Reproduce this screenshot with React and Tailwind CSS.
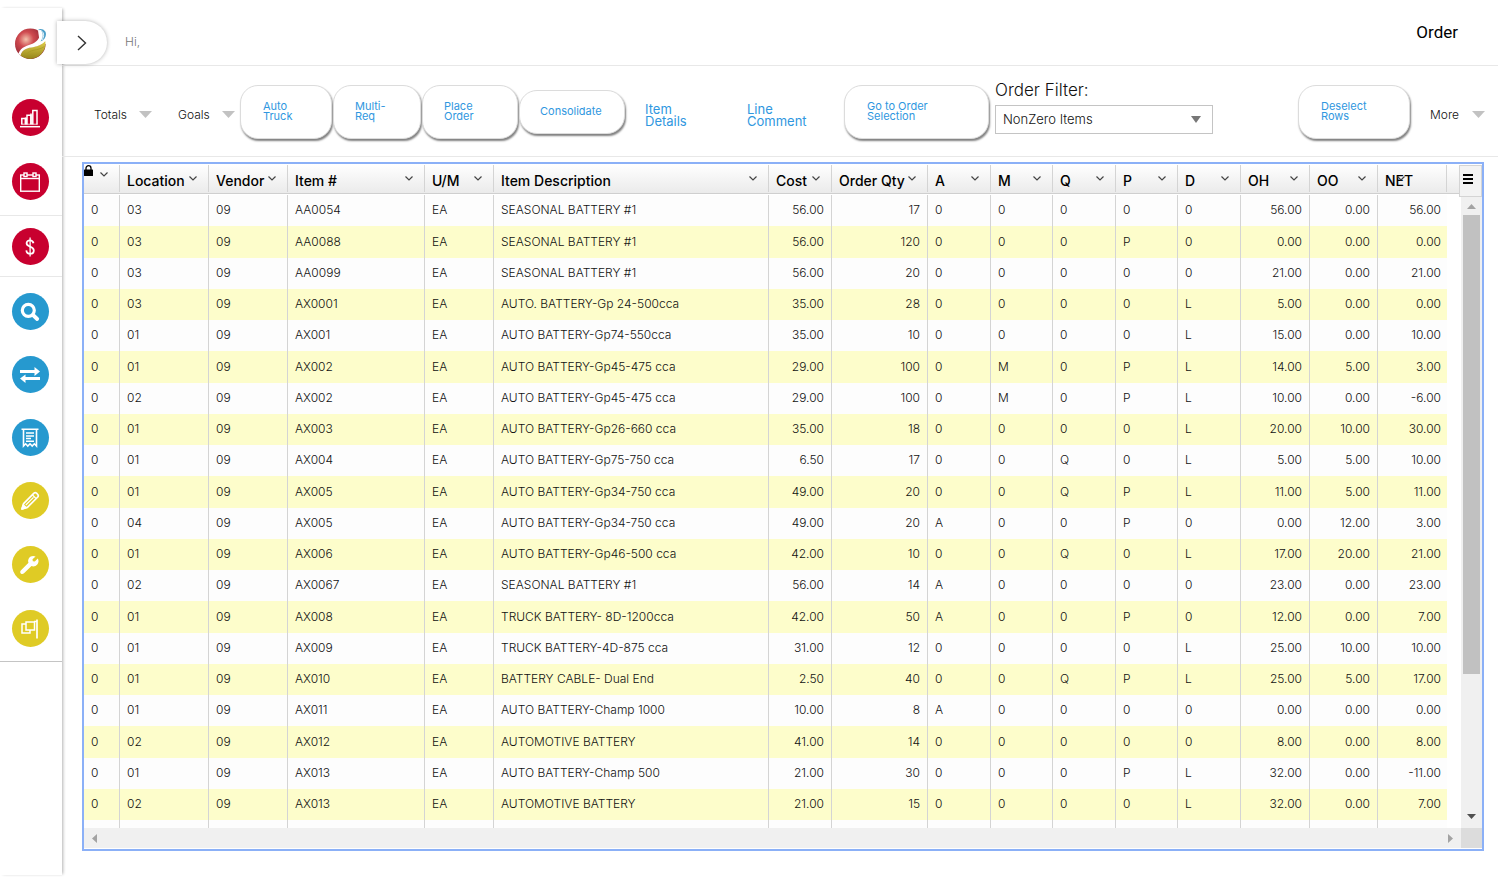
import clsx from "clsx";

const COLUMNS = [
  { key: "lock", label: "", width: "w-9" },
  { key: "location", label: "Location", width: "w-[89px]" },
  { key: "vendor", label: "Vendor", width: "w-[79px]" },
  { key: "item", label: "Item #", width: "w-[137px]" },
  { key: "um", label: "U/M", width: "w-[69px]" },
  { key: "description", label: "Item Description", width: "" },
  { key: "cost", label: "Cost", width: "w-[63px]", right: true },
  { key: "qty", label: "Order Qty", width: "w-24", right: true },
  { key: "a", label: "A", width: "w-[63px]" },
  { key: "m", label: "M", width: "w-[62px]" },
  { key: "q", label: "Q", width: "w-[63px]" },
  { key: "p", label: "P", width: "w-[62px]" },
  { key: "d", label: "D", width: "w-[63px]" },
  { key: "oh", label: "OH", width: "w-[69px]", right: true },
  { key: "oo", label: "OO", width: "w-[68px]", right: true },
  { key: "net", label: "NET", width: "w-[69px]", right: true },
];

const ROWS = [
  ["0", "03", "09", "AA0054", "EA", "SEASONAL BATTERY #1", "56.00", "17", "0", "0", "0", "0", "0", "56.00", "0.00", "56.00"],
  ["0", "03", "09", "AA0088", "EA", "SEASONAL BATTERY #1", "56.00", "120", "0", "0", "0", "P", "0", "0.00", "0.00", "0.00"],
  ["0", "03", "09", "AA0099", "EA", "SEASONAL BATTERY #1", "56.00", "20", "0", "0", "0", "0", "0", "21.00", "0.00", "21.00"],
  ["0", "03", "09", "AX0001", "EA", "AUTO. BATTERY-Gp 24-500cca", "35.00", "28", "0", "0", "0", "0", "L", "5.00", "0.00", "0.00"],
  ["0", "01", "09", "AX001", "EA", "AUTO BATTERY-Gp74-550cca", "35.00", "10", "0", "0", "0", "0", "L", "15.00", "0.00", "10.00"],
  ["0", "01", "09", "AX002", "EA", "AUTO BATTERY-Gp45-475 cca", "29.00", "100", "0", "M", "0", "P", "L", "14.00", "5.00", "3.00"],
  ["0", "02", "09", "AX002", "EA", "AUTO BATTERY-Gp45-475 cca", "29.00", "100", "0", "M", "0", "P", "L", "10.00", "0.00", "-6.00"],
  ["0", "01", "09", "AX003", "EA", "AUTO BATTERY-Gp26-660 cca", "35.00", "18", "0", "0", "0", "0", "L", "20.00", "10.00", "30.00"],
  ["0", "01", "09", "AX004", "EA", "AUTO BATTERY-Gp75-750 cca", "6.50", "17", "0", "0", "Q", "0", "L", "5.00", "5.00", "10.00"],
  ["0", "01", "09", "AX005", "EA", "AUTO BATTERY-Gp34-750 cca", "49.00", "20", "0", "0", "Q", "P", "L", "11.00", "5.00", "11.00"],
  ["0", "04", "09", "AX005", "EA", "AUTO BATTERY-Gp34-750 cca", "49.00", "20", "A", "0", "0", "P", "0", "0.00", "12.00", "3.00"],
  ["0", "01", "09", "AX006", "EA", "AUTO BATTERY-Gp46-500 cca", "42.00", "10", "0", "0", "Q", "0", "L", "17.00", "20.00", "21.00"],
  ["0", "02", "09", "AX0067", "EA", "SEASONAL BATTERY #1", "56.00", "14", "A", "0", "0", "0", "0", "23.00", "0.00", "23.00"],
  ["0", "01", "09", "AX008", "EA", "TRUCK BATTERY- 8D-1200cca", "42.00", "50", "A", "0", "0", "P", "0", "12.00", "0.00", "7.00"],
  ["0", "01", "09", "AX009", "EA", "TRUCK BATTERY-4D-875 cca", "31.00", "12", "0", "0", "0", "0", "L", "25.00", "10.00", "10.00"],
  ["0", "01", "09", "AX010", "EA", "BATTERY CABLE- Dual End", "2.50", "40", "0", "0", "Q", "P", "L", "25.00", "5.00", "17.00"],
  ["0", "01", "09", "AX011", "EA", "AUTO BATTERY-Champ 1000", "10.00", "8", "A", "0", "0", "0", "0", "0.00", "0.00", "0.00"],
  ["0", "02", "09", "AX012", "EA", "AUTOMOTIVE BATTERY", "41.00", "14", "0", "0", "0", "0", "0", "8.00", "0.00", "8.00"],
  ["0", "01", "09", "AX013", "EA", "AUTO BATTERY-Champ 500", "21.00", "30", "0", "0", "0", "P", "L", "32.00", "0.00", "-11.00"],
  ["0", "02", "09", "AX013", "EA", "AUTOMOTIVE BATTERY", "21.00", "15", "0", "0", "0", "0", "L", "32.00", "0.00", "7.00"],
];

function Logo() {
  return (
    <svg viewBox="0 0 32 32" className="h-8 w-8" role="img" aria-label="Home">
      <defs>
        <radialGradient id="ballRed" cx="0.36" cy="0.36" r="0.62">
          <stop offset="0" stopColor="#f3c3ad" />
          <stop offset="0.4" stopColor="#cf4a50" />
          <stop offset="1" stopColor="#8c2230" />
        </radialGradient>
        <linearGradient id="ballGold" x1="0" y1="0" x2="0" y2="1">
          <stop offset="0" stopColor="#e0d04c" />
          <stop offset="1" stopColor="#96851a" />
        </linearGradient>
      </defs>
      <circle cx="16.300" cy="15.700" r="15.300" fill="url(#ballRed)" />
      <path d="M24 2.500L32 2V16H26Z" fill="#fff" />
      <path d="M6.500 27.500C8 20.500 15 19.500 21 18.500C26 17.500 29 15.500 31.200 13A15.300 15.300 0 0 1 6.500 27.500Z" fill="url(#ballGold)" />
      <path d="M12 27C16 20.500 23 23.500 30.500 18.500" fill="none" stroke="#a99a25" strokeWidth="0.800" />
      <path d="M4.500 25.500C7 18.500 14 17.500 19 15.500C24 13 27 9 25 3L28.500 3C29.500 9 27 13 31.500 11.500C30 15.500 25 18 20 19C13 20 8.500 21 6.500 27.500Z" fill="#fff" />
      <path d="M24 1.500C29 2.500 30.500 7 26.500 13.500C31.500 11.500 33 6.500 31.300 3.500C29.500 .8 26.500 .5 24 1.500Z" fill="#4b9fc9" />
      <path d="M26 2.300C30.300 3.500 30.500 8 28 12" fill="none" stroke="#fff" strokeWidth="0.900" />
    </svg>
  );
}

const ICONS = {
  chart: (
    <g fill="none" stroke="#fff" strokeWidth="1.500">
      <path d="M0 18.700H20" />
      <path d="M1.800 16.500V10.500H5.500V16.500M7 16.500V7.200H11V16.500M12.800 16.500V2.500H17V16.500" />
      <path d="M5.500 16V9.500M11 16V5.500" />
      <path d="M1.500 16.200H17.500" strokeWidth="0.800" />
    </g>
  ),
  calendar: (
    <g fill="none" stroke="#fff" strokeWidth="1.400">
      <rect x="0.700" y="3" width="18.600" height="16.200" />
      <path d="M1 6.500H19" />
      <rect x="4" y="1" width="3" height="3.500" fill="#c8002f" />
      <rect x="13" y="1" width="3" height="3.500" fill="#c8002f" />
    </g>
  ),
  dollar: (
    <g fill="none" stroke="#fff" strokeWidth="1.800">
      <path d="M13.500 6.200C13 4 11.800 3.300 10 3.300C8 3.300 6.600 4.500 6.600 6.300C6.600 10.500 13.800 8.800 13.800 13.400C13.800 15.600 12.200 16.700 10.200 16.700C8 16.700 6.600 15.700 6.300 13.300" />
      <path d="M10.100 0.500V19.500" strokeWidth="1.300" />
    </g>
  ),
  search: (
    <g fill="none" stroke="#fff">
      <circle cx="8.300" cy="8.300" r="6" strokeWidth="3.200" />
      <path d="M13 13L17.200 17" strokeWidth="3.800" strokeLinecap="round" />
    </g>
  ),
  transfer: (
    <path
      d="M0 5H14.500V2L20 6.500L14.500 11V8H0ZM20 15H5.500V18L0 13.500L5.500 9.500V12H20Z"
      fill="#fff"
    />
  ),
  receipt: (
    <g fill="none" stroke="#fff" strokeWidth="1.600">
      <path d="M1.500 1.200H18.500M3.500 1V18L5.700 15.800L7.800 18L10 15.800L12.200 18L14.300 15.800L16.500 18V1" />
      <path d="M6 5H14M6 8H14M6 10.500H11M6 13.200H14" strokeWidth="1.400" />
    </g>
  ),
  pencil: (
    <g fill="none" stroke="#fff" strokeWidth="1.700" strokeLinejoin="round">
      <path d="M2 18L3.600 12.600L14 2.200Q15.200 1.200 16.500 2.200L17.800 3.500Q18.800 4.800 17.800 6L7.400 16.400Z" />
      <path d="M12.500 4L16 7.500M5.800 14L13.500 6.300" strokeWidth="1.200" />
      <path d="M2 18L3.300 14L6 16.700Z" fill="#fff" />
    </g>
  ),
  wrench: (
    <path
      d="M17.800 3.600L14.800 6.600L12.800 6.300L12.500 4.300L15.600 1.400C13 .3 10.300 1 8.900 3.200C8 4.700 7.900 6.300 8.500 7.800L1 15.200C0 16.300 0 17.500 .8 18.400C1.700 19.300 3 19.300 4 18.300L11.500 11.100C13.500 11.900 15.800 11.300 17.300 9.600C18.800 7.900 18.900 5.500 17.800 3.600Z"
      fill="#fff"
    />
  ),
  sign: (
    <g fill="none" stroke="#fff" strokeWidth="1.500">
      <path d="M6 5H2V14H10V11" />
      <rect x="6" y="3" width="8.500" height="8" />
      <path d="M14 2.500H17M17 0.500V19.500" strokeWidth="1.700" />
    </g>
  ),
};

function NavItem({ icon, label, color }) {
  return (
    <a
      href="#"
      aria-label={label}
      className={clsx("flex h-[37px] w-[37px] items-center justify-center rounded-full", color)}
    >
      <svg viewBox="0 0 20 20" className="mr-px h-5 w-5">
        {ICONS[icon]}
      </svg>
    </a>
  );
}

function Sidebar() {
  return (
    <nav className="mt-2 mb-[7px] w-[62px] shrink-0 bg-white shadow-[2px_0_3px_-1px_rgba(0,0,0,0.3)]">
      <a href="#" className="mt-5 ml-[14px] block w-8">
        <Logo />
      </a>
      <div className="mt-[39px] flex flex-col items-center gap-[27px] border-b border-[#e8e8e8] pr-px pb-[15px]">
        <NavItem icon="chart" label="Analytics" color="bg-[#c8002f]" />
        <NavItem icon="calendar" label="Calendar" color="bg-[#c8002f]" />
      </div>
      <div className="flex flex-col items-center border-b border-[#e8e8e8] pt-3 pr-px pb-[11px]">
        <NavItem icon="dollar" label="Buying" color="bg-[#c8002f]" />
      </div>
      <div className="flex flex-col items-center gap-[26px] pt-4 pr-px">
        <NavItem icon="search" label="Search" color="bg-[#2699cf]" />
        <NavItem icon="transfer" label="Transfers" color="bg-[#2699cf]" />
        <NavItem icon="receipt" label="Receipts" color="bg-[#2699cf]" />
      </div>
      <div className="flex flex-col items-center gap-[27px] border-b border-[#c4c4c4] pt-[26px] pr-px pb-[14px]">
        <NavItem icon="pencil" label="Edit" color="bg-[#dfcb25]" />
        <NavItem icon="wrench" label="Tools" color="bg-[#dfcb25]" />
        <NavItem icon="sign" label="Signs" color="bg-[#dfcb25]" />
      </div>
    </nav>
  );
}

function Header() {
  return (
    <header className="flex h-[66px] items-start justify-between border-b border-[#e8e8e8] pr-10">
      <div className="flex items-center pt-[21px]">
        <button
          type="button"
          aria-label="Expand menu"
          className="z-10 -ml-[5px] flex h-[43px] w-[50px] items-center rounded-r-full bg-white pl-5 shadow-[0_0_4px_rgba(0,0,0,0.3)]"
        >
          <svg viewBox="0 0 10 16" className="h-4 w-[10px]" fill="none" stroke="#333" strokeWidth="1.400">
            <path d="M1 1L8.500 8L1 15" />
          </svg>
        </button>
        <span className="ml-[18px] pb-[2px] text-xs font-light text-[#777]">Hi,</span>
      </div>
      <h1 className="pt-5 font-[Roboto,sans-serif] text-[17px] leading-6 text-black">Order</h1>
    </header>
  );
}

function MenuButton({ label, className }) {
  return (
    <button type="button" className={clsx("flex items-center justify-between pt-[5px] text-xs font-light text-[#111]", className)}>
      {label}
      <svg viewBox="0 0 13 7" className="h-[7px] w-[13px]" fill="#c2c2c2">
        <path d="M0 0H13L6.500 7Z" />
      </svg>
    </button>
  );
}

function PillButton({ children, className }) {
  return (
    <button
      type="button"
      className={clsx(
        "rounded-[18px] border border-[#dcdcdc] bg-white pb-[2px] text-left text-[11px] leading-[10px] text-[#3097e0] shadow-[1px_2px_2px_#808080]",
        className,
      )}
    >
      {children}
    </button>
  );
}

function LinkButton({ children, className }) {
  return (
    <a href="#" className={clsx("pt-[6px] text-[13px] leading-3 text-[#3097e0]", className)}>
      {children}
    </a>
  );
}

function Toolbar() {
  return (
    <div className="flex h-[91px] items-center justify-between border-b border-[#e8e8e8] pt-[2px] pr-[13px] pl-8">
      <div className="flex items-center">
        <MenuButton label="Totals" className="w-[58px]" />
        <MenuButton label="Goals" className="mr-[5px] ml-[26px] w-[57px]" />
        <PillButton className="h-[54px] w-[92px] px-[22px]">
          Auto
          <br />
          Truck
        </PillButton>
        <PillButton className="ml-px h-[54px] w-[88px] px-[21px]">
          Multi-
          <br />
          Req
        </PillButton>
        <PillButton className="ml-px h-[54px] w-[96px] px-[21px]">
          Place
          <br />
          Order
        </PillButton>
        <PillButton className="ml-px h-[44px] w-[106px] px-5">Consolidate</PillButton>
        <LinkButton className="ml-5 w-[102px]">
          Item
          <br />
          Details
        </LinkButton>
        <LinkButton className="w-[97px]">
          Line
          <br />
          Comment
        </LinkButton>
        <PillButton className="h-[54px] w-[145px] px-[22px]">
          Go to Order
          <br />
          Selection
        </PillButton>
        <div className="ml-[6px] flex w-[218px] flex-col pb-[10px]">
          <label htmlFor="order-filter" className="text-[17px] leading-5 font-light text-[#111]">
            Order Filter:
          </label>
          <div className="relative mt-[5px]">
            <select
              id="order-filter"
              className="h-[29px] w-full appearance-none border border-[#c4c4c4] bg-white px-[7px] text-[13px] font-light text-[#111]"
            >
              <option>NonZero Items</option>
            </select>
            <svg viewBox="0 0 10 7" className="pointer-events-none absolute top-[11px] right-3 h-[7px] w-[10px]" fill="#777">
              <path d="M0 0H10L5 7Z" />
            </svg>
          </div>
        </div>
      </div>
      <div className="flex items-center">
        <PillButton className="h-[54px] w-28 px-[22px]">
          Deselect
          <br />
          Rows
        </PillButton>
        <MenuButton label="More" className="ml-5 w-[55px]" />
      </div>
    </div>
  );
}

function Chevron({ className }) {
  return (
    <svg
      viewBox="0 0 8 5"
      className={clsx("absolute h-[5px] w-2", className)}
      fill="none"
      stroke="#444"
      strokeWidth="1.200"
    >
      <path d="M0.500 0.500L4 4L7.500 0.500" />
    </svg>
  );
}

function HeaderCell({ column }) {
  return (
    <th scope="col" className="p-0 text-left font-medium text-black">
      <div className="relative mt-px h-[27px] border-r border-[#d4d4d4] pl-[7px] text-sm leading-8 whitespace-nowrap">
        {column.label}
        {column.key === "lock" ? (
          <>
            <svg viewBox="0 0 9 11" className="absolute top-0 left-0 h-[11px] w-[9px]">
              <rect y="4.500" width="9" height="6.500" rx="0.500" />
              <path d="M2 5V3.200a2.500 2.500 0 0 1 5 0V5" fill="none" stroke="#000" strokeWidth="1.300" />
            </svg>
            <Chevron className="top-[7px] right-[11px]" />
          </>
        ) : (
          <Chevron className={clsx("top-[11px]", column.key === "net" ? "right-[41px]" : "right-[11px]")} />
        )}
      </div>
    </th>
  );
}

function OrderTable() {
  return (
    <div className="min-w-0 flex-1 overflow-hidden">
      <table className="w-full table-fixed border-separate border-spacing-0">
        <colgroup>
          {COLUMNS.map((column) => (
            <col key={column.key} className={column.width} />
          ))}
          <col className="w-3" />
        </colgroup>
        <thead>
          <tr className="h-[30px] bg-linear-to-b from-white to-[#eaeaea] align-top shadow-[inset_0_-1px_#cfcfcf]">
            {COLUMNS.map((column) => (
              <HeaderCell key={column.key} column={column} />
            ))}
            <td className="p-0" />
          </tr>
        </thead>
        <tbody className="text-xs font-light text-[#111]">
          <tr className="h-px" aria-hidden="true">
            <td className="p-0" colSpan={17} />
          </tr>
          {ROWS.map((row, index) => (
            <tr
              key={index}
              className={clsx(
                index % 4 === 1 ? "h-8" : "h-[31px]",
                index % 2 ? "bg-[#fdfdcb]" : "bg-[#fdfdfd]",
              )}
            >
              {row.map((value, i) => (
                <td
                  key={COLUMNS[i].key}
                  className={clsx(
                    "overflow-hidden pt-0 pb-px pl-[7px] whitespace-nowrap",
                    COLUMNS[i].right && "text-right",
                    i < row.length - 1 ? "border-r border-[#d4d4d4] pr-[7px]" : "pr-[6px]",
                  )}
                >
                  {value}
                </td>
              ))}
              <td className="bg-white p-0" />
            </tr>
          ))}
          {/* next row, cut off by the viewport */}
          <tr className="h-[31px] bg-[#fdfdfd]" aria-hidden="true">
            {COLUMNS.map((column, i) => (
              <td key={column.key} className={clsx("p-0", i < COLUMNS.length - 1 && "border-r border-[#d4d4d4]")} />
            ))}
            <td className="bg-white p-0" />
          </tr>
        </tbody>
      </table>
    </div>
  );
}

function Grid() {
  return (
    <section className="mt-[5px] mr-[14px] mb-[31px] ml-5 flex min-h-0 flex-1 flex-col border-2 border-[#8bb0f7] bg-white pb-px">
      <div className="flex min-h-0 flex-1">
        <OrderTable />
        <div className="flex w-[23px] flex-col items-end">
          <button
            type="button"
            aria-label="Grid menu"
            className="mt-px flex h-8 w-full shrink-0 items-start border border-[#d4d4d4] bg-[#f3f3f3] pt-2 pl-[3px]"
          >
            <svg viewBox="0 0 10 10" className="h-[10px] w-[10px]" fill="none" stroke="#000" strokeWidth="2">
              <path d="M0 1H10M0 5H10M0 9H10" />
            </svg>
          </button>
          <div className="flex min-h-0 w-[21px] flex-1 flex-col bg-[#f0f0f0] px-[2px]">
            <div className="flex h-[18px] shrink-0 items-center justify-center">
              <svg viewBox="0 0 9 5" className="h-[5px] w-[9px]" fill="#a3a3a3">
                <path d="M0 5L4.500 0L9 5Z" />
              </svg>
            </div>
            <div className="min-h-0 flex-1">
              <div className="h-[78%] bg-[#c1c1c1]" />
            </div>
            <div className="flex h-6 shrink-0 items-center justify-center">
              <svg viewBox="0 0 9 5" className="h-[5px] w-[9px]" fill="#505050">
                <path d="M0 0H9L4.500 5Z" />
              </svg>
            </div>
          </div>
        </div>
      </div>
      <div className="flex h-5 shrink-0 bg-[#f0f0f0]">
        <div className="flex flex-1 items-center justify-between px-2">
          <svg viewBox="0 0 5 9" className="h-[9px] w-[5px]" fill="#a3a3a3">
            <path d="M5 0V9L0 4.500Z" />
          </svg>
          <svg viewBox="0 0 5 9" className="h-[9px] w-[5px]" fill="#a3a3a3">
            <path d="M0 0V9L5 4.500Z" />
          </svg>
        </div>
        <div className="w-[21px] bg-[#dcdcdc]" />
      </div>
    </section>
  );
}

export default function App() {
  return (
    <div className="flex h-screen bg-white font-[Inter,'Open_Sans',sans-serif]">
      <Sidebar />
      <main className="flex min-w-0 flex-1 flex-col">
        <Header />
        <Toolbar />
        <Grid />
      </main>
    </div>
  );
}
